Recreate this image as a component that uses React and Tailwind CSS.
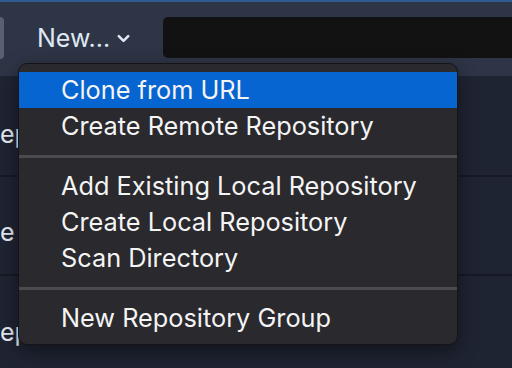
import { ChevronDown } from "lucide-react";

const groups = [
  ["Clone from URL", "Create Remote Repository"],
  ["Add Existing Local Repository", "Create Local Repository", "Scan Directory"],
  ["New Repository Group"],
];

export default function App() {
  return (
    <div
      className="relative w-[512px] h-[368px] overflow-hidden bg-[#1f2433] text-[#e6ecf3]"
      style={{ fontFamily: "Inter, 'Noto Sans', sans-serif" }}
    >
      <div className="h-[2px] bg-[#2f5b91]" />

      {/* toolbar */}
      <div className="h-[74px] bg-[#2e3546] flex items-start pt-[15px]">
        <div className="w-[4px] h-[42px] rounded-r-[4px] bg-[#596071]" />
        <button className="ml-[33px] mt-[8px] flex items-center gap-[4px] text-[25px] leading-[26px] text-[#dfe8f2]">
          New...
          <ChevronDown size={19} strokeWidth={3.2} className="mt-[1px]" />
        </button>
        <div className="ml-[30px] flex-1 h-[41px] rounded-l-[5px] bg-[#121212]" />
      </div>

      {/* list behind menu */}
      <div className="flex flex-col text-[25px]">
        <div className="h-[101px] border-b-2 border-[#151a25] pt-[40px]">ep</div>
        <div className="h-[99px] border-b-2 border-[#151a25] pt-[37px]">e</div>
        <div className="h-[92px] pt-[38px]">ep</div>
      </div>

      {/* dropdown menu */}
      <div className="absolute left-[18px] top-[63px] w-[440px] rounded-[9px] bg-[#2a292d] border border-[#151517] shadow-[0_6px_20px_rgba(0,0,0,0.45)] py-[8px] text-[25.3px] text-[#f4f4f5]">
        {groups.map((items, gi) => (
          <div key={gi}>
            {gi > 0 && (
              <div className="h-[24px] flex items-center">
                <div className="w-full h-[3px] bg-[#4b4a4f]" />
              </div>
            )}
            {items.map((label) => (
              <div
                key={label}
                className={`h-[36px] flex items-center pl-[42px] ${
                  label === "Clone from URL" ? "bg-[#0665d0]" : ""
                }`}
              >
                {label}
              </div>
            ))}
          </div>
        ))}
      </div>
    </div>
  );
}
